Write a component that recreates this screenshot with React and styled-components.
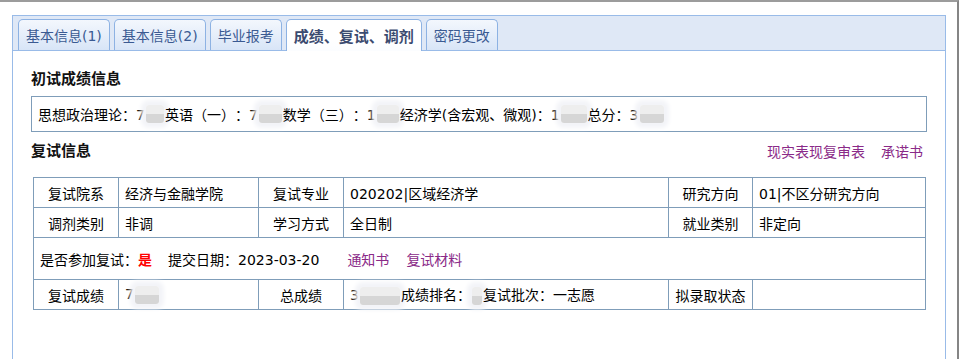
import React from "react";
import styled, { createGlobalStyle } from "styled-components";

const GlobalStyle = createGlobalStyle`
    html, body {
        margin: 0;
        padding: 0;
        background: #ffffff;
    }
    body {
        font-family: "DejaVu Sans", "Noto Sans CJK SC", sans-serif;
        font-size: 14px;
        color: #000000;
        text-spacing-trim: space-all;
    }
`;

const tabs = [
    { label: "基本信息(1)" },
    { label: "基本信息(2)" },
    { label: "毕业报考" },
    { label: "成绩、复试、调剂", active: true },
    { label: "密码更改" },
];

const App = () => {
    return (
        <Frame>
            <GlobalStyle />
            <Panel>
                <TabStrip>
                    {tabs.map((t) => (
                        <Tab key={t.label} $active={t.active}>
                            {t.label}
                        </Tab>
                    ))}
                </TabStrip>
                <Body>
                    <SectionTitle>初试成绩信息</SectionTitle>
                    <ScoreBox>
                        思想政治理论：7<Redact $w={18} />英语（一）：7
                        <Redact $w={23} />数学（三）：1<Redact $w={22} />
                        经济学(含宏观、微观)：1<Redact $w={26} />
                        总分：3<Redact $w={24} />
                    </ScoreBox>
                    <SectionHead>
                        <SectionTitle as="div">复试信息</SectionTitle>
                        <LinkGroup>
                            <Link href="#">现实表现复审表</Link>
                            <Link href="#">承诺书</Link>
                        </LinkGroup>
                    </SectionHead>
                    <InfoTable>
                        <colgroup>
                            <col style={{ width: 85 }} />
                            <col style={{ width: 140 }} />
                            <col style={{ width: 85 }} />
                            <col style={{ width: 325 }} />
                            <col style={{ width: 84 }} />
                            <col style={{ width: 173 }} />
                        </colgroup>
                        <tbody>
                            <tr>
                                <Label>复试院系</Label>
                                <Value>经济与金融学院</Value>
                                <Label>复试专业</Label>
                                <Value>020202|区域经济学</Value>
                                <Label>研究方向</Label>
                                <Value>01|不区分研究方向</Value>
                            </tr>
                            <tr>
                                <Label>调剂类别</Label>
                                <Value>非调</Value>
                                <Label>学习方式</Label>
                                <Value>全日制</Value>
                                <Label>就业类别</Label>
                                <Value>非定向</Value>
                            </tr>
                            <tr>
                                <Value colSpan={6} $tall>
                                    是否参加复试：<Yes>是</Yes>
                                    <Spacer $w={16} />提交日期：2023-03-20
                                    <Spacer $w={28} />
                                    <Link href="#">通知书</Link>
                                    <Spacer $w={17} />
                                    <Link href="#">复试材料</Link>
                                </Value>
                            </tr>
                            <tr>
                                <Label>复试成绩</Label>
                                <Value>
                                    7<Redact $w={24} />
                                </Value>
                                <Label>总成绩</Label>
                                <Value>
                                    3<Redact $w={40} />成绩排名：<Redact $w={10} />
                                    复试批次：一志愿
                                </Value>
                                <Label>拟录取状态</Label>
                                <Value></Value>
                            </tr>
                        </tbody>
                    </InfoTable>
                </Body>
            </Panel>
        </Frame>
    );
};

const Frame = styled.div`
    box-sizing: border-box;
    width: 959px;
    height: 359px;
    overflow: hidden;
    border-top: 2px solid #9c9c9c;
    border-right: 2px solid #858585;
    padding: 13px 0 0 12px;
`;

const Panel = styled.div`
    width: 934px;
    height: 400px;
    display: flex;
    flex-direction: column;
`;

const TabStrip = styled.div`
    box-sizing: border-box;
    height: 36px;
    display: flex;
    align-items: flex-end;
    gap: 4px;
    padding: 3px 0 0 5px;
    background: #dfe8f6;
    border: 1px solid #99bbe8;
`;

const Tab = styled.div`
    box-sizing: border-box;
    height: ${(p) => (p.$active ? "32px" : "31px")};
    margin-bottom: ${(p) => (p.$active ? "-1px" : "0")};
    padding: 0 7px;
    display: flex;
    align-items: center;
    border: 1px solid #8db2e3;
    border-bottom: none;
    border-radius: 5px 5px 0 0;
    background: ${(p) =>
        p.$active
            ? "linear-gradient(to bottom, #ffffff 0%, #ffffff 60%, #fbfdff 100%)"
            : "linear-gradient(to bottom, #f3f7fd 0%, #e6eefa 50%, #d8e5f7 100%)"};
    color: ${(p) => (p.$active ? "#3b4b70" : "#3a5a92")};
    font-size: ${(p) => (p.$active ? "15px" : "14px")};
    font-weight: ${(p) => (p.$active ? "bold" : "normal")};
    white-space: nowrap;
    cursor: pointer;
`;

const Body = styled.div`
    flex: 1;
    border-left: 1px solid #99bbe8;
    border-right: 1px solid #99bbe8;
    padding: 17px 18px 0 18px;
    background: #ffffff;
`;

const SectionTitle = styled.div`
    font-size: 15px;
    font-weight: bold;
    line-height: 22px;
    color: #111111;
`;

const ScoreBox = styled.div`
    box-sizing: border-box;
    height: 36px;
    margin-top: 6px;
    border: 1px solid #7f9db9;
    padding: 0 6px;
    display: flex;
    align-items: center;
    white-space: nowrap;
`;

const SectionHead = styled.div`
    margin-top: 8px;
    display: flex;
    justify-content: space-between;
    align-items: center;
`;

const LinkGroup = styled.div`
    display: flex;
    gap: 16px;
    padding-right: 4px;
`;

const Link = styled.a`
    color: #8a2a88;
    text-decoration: none;
    font-size: 14px;
`;

const Redact = styled.span`
    display: inline-block;
    width: ${(p) => p.$w}px;
    height: 18px;
    margin: 0 1px;
    border-radius: 3px;
    background: linear-gradient(to bottom, #eeeeee 50%, #d6d6d6 50%);
    box-shadow: 0 0 4px 5px #f3f4f8;
    vertical-align: middle;
`;

const Spacer = styled.span`
    display: inline-block;
    width: ${(p) => p.$w}px;
`;

const InfoTable = styled.table`
    margin: 15px 0 0 2px;
    width: 892px;
    table-layout: fixed;
    border-collapse: collapse;
    font-size: 14px;
`;

const Label = styled.td`
    height: 29px;
    padding: 0 4px;
    border: 1px solid #7f9db9;
    text-align: center;
    white-space: nowrap;
`;

const Value = styled.td`
    height: ${(p) => (p.$tall ? "41px" : "29px")};
    padding: 0 6px;
    border: 1px solid #7f9db9;
    text-align: left;
    white-space: nowrap;
    overflow: visible;
`;

const Yes = styled.span`
    color: #ff0000;
    font-weight: bold;
`;

export default App;
